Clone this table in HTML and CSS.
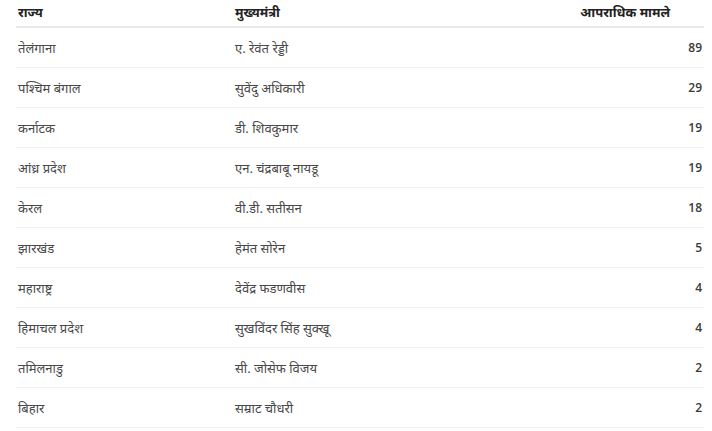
FILE: index.html
```html
<!DOCTYPE html>
<html lang="hi">
<head>
<meta charset="utf-8">
<link rel="stylesheet" href="styles.css">
</head>
<body>
<table class="cm-table">
  <thead>
    <tr><th class="c-state">राज्य</th><th class="c-cm">मुख्यमंत्री</th><th class="c-num">आपराधिक मामले</th></tr>
  </thead>
  <tbody>
    <tr><td>तेलंगाना</td><td>ए. रेवंत रेड्डी</td><td class="c-num">89</td></tr>
    <tr><td>पश्चिम बंगाल</td><td>सुवेंदु अधिकारी</td><td class="c-num">29</td></tr>
    <tr><td>कर्नाटक</td><td>डी. शिवकुमार</td><td class="c-num">19</td></tr>
    <tr><td>आंध्र प्रदेश</td><td>एन. चंद्रबाबू नायडू</td><td class="c-num">19</td></tr>
    <tr><td>केरल</td><td>वी.डी. सतीसन</td><td class="c-num">18</td></tr>
    <tr><td>झारखंड</td><td>हेमंत सोरेन</td><td class="c-num">5</td></tr>
    <tr><td>महाराष्ट्र</td><td>देवेंद्र फडणवीस</td><td class="c-num">4</td></tr>
    <tr><td>हिमाचल प्रदेश</td><td>सुखविंदर सिंह सुक्खू</td><td class="c-num">4</td></tr>
    <tr><td>तमिलनाडु</td><td>सी. जोसेफ विजय</td><td class="c-num">2</td></tr>
    <tr><td>बिहार</td><td>सम्राट चौधरी</td><td class="c-num">2</td></tr>
  </tbody>
</table>
</body>
</html>
```
FILE: styles.css
```css
html, body {
  margin: 0;
  padding: 0;
  background: #ffffff;
}
body {
  padding: 0 8px 0 16px;
  font-family: "Noto Sans", "Open Sans", sans-serif;
  color: #484848;
}
.cm-table {
  width: 688px;
  border-collapse: collapse;
  font-size: 13px;
}
.cm-table th {
  font-weight: 700;
  text-align: left;
  color: #222222;
  height: 26px;
  padding: 0 2px;
  vertical-align: top;
  line-height: 24px;
  border-bottom: 2px solid #e8e8e8;
}
.cm-table th.c-num {
  padding-right: 34px;
}
.cm-table td {
  height: 39px;
  padding: 0 2px;
  border-bottom: 1px solid #f0f0f0;
  vertical-align: middle;
}
.cm-table .c-state { width: 213px; }
.cm-table .c-num {
  text-align: right;
}
.cm-table td.c-num {
  font-family: "Open Sans", sans-serif;
  font-weight: 600;
  font-size: 12px;
  color: #3a3a3a;
}
```
